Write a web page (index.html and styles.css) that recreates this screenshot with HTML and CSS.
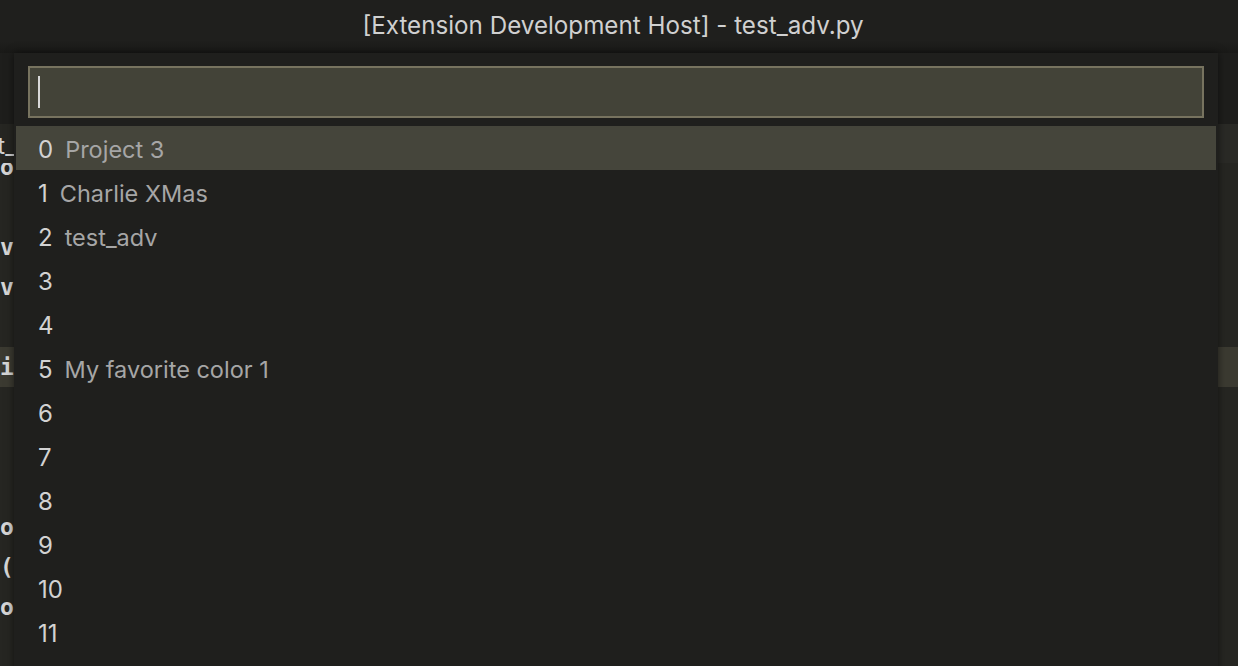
FILE: index.html
```html
<!DOCTYPE html>
<html>
<head>
<meta charset="utf-8">
<link rel="stylesheet" href="styles.css">
</head>
<body>
<div class="window">
  <div class="titlebar"><span class="title">[Extension Development Host] - test_adv.py</span></div>
  <div class="workbench">
    <div class="topband"></div>
    <div class="tabbar"><div class="tab">test_adv.py</div></div>
    <div class="editor">
      <div class="code">
        <div class="line">out = []</div>
        <div class="line"></div>
        <div class="line">var1 = 1</div>
        <div class="line">var2 = 2</div>
        <div class="line"></div>
        <div class="line current">if var1 == var2:</div>
        <div class="line">    pass</div>
        <div class="line"></div>
        <div class="line"></div>
        <div class="line">out.append(var1)</div>
        <div class="line">(var1, var2)</div>
        <div class="line">out.sort()</div>
        <div class="line"></div>
      </div>
    </div>
  </div>

  <div class="quickpick">
    <div class="inputbox"><span class="caret"></span></div>
    <div class="list">
      <div class="item selected"><span class="num">0</span><span class="label">Project 3</span></div>
      <div class="item"><span class="num">1</span><span class="label">Charlie XMas</span></div>
      <div class="item"><span class="num">2</span><span class="label">test_adv</span></div>
      <div class="item"><span class="num">3</span></div>
      <div class="item"><span class="num">4</span></div>
      <div class="item"><span class="num">5</span><span class="label">My favorite color 1</span></div>
      <div class="item"><span class="num">6</span></div>
      <div class="item"><span class="num">7</span></div>
      <div class="item"><span class="num">8</span></div>
      <div class="item"><span class="num">9</span></div>
      <div class="item"><span class="num">10</span></div>
      <div class="item"><span class="num">11</span></div>
    </div>
  </div>
</div>
</body>
</html>
```

FILE: styles.css
```css
* { box-sizing: border-box; }
html, body {
  margin: 0;
  padding: 0;
  width: 1238px;
  height: 666px;
  overflow: hidden;
  background: #262622;
}
.window {
  position: relative;
  width: 1238px;
  height: 666px;
  overflow: hidden;
  display: flex;
  flex-direction: column;
  font-family: "Inter", "Liberation Sans", sans-serif;
}
.titlebar {
  height: 53px;
  flex: none;
  background: linear-gradient(#1f1f1d 0, #1f1f1d 42px, #191917 53px);
  display: flex;
  justify-content: center;
  align-items: center;
  padding: 0 12px 2px 0;
}
.title {
  color: #d0d0d0;
  font-size: 24.2px;
}
.workbench {
  flex: 1;
  display: flex;
  flex-direction: column;
  min-height: 0;
}
.topband {
  height: 71px;
  flex: none;
  background: #1e1e1c;
}
.tabbar {
  height: 39px;
  flex: none;
  background: #2a2a26;
  overflow: hidden;
}
.tab {
  display: inline-block;
  height: 39px;
  line-height: 43px;
  margin-left: -37px;
  padding-right: 16px;
  color: #d0d0d0;
  font-size: 24px;
  background: #262622;
}
.editor {
  flex: 1;
  overflow: hidden;
  background: #262622;
  min-height: 0;
}
.code {
  margin-top: -16px;
  font-family: "DejaVu Sans Mono", "Liberation Mono", monospace;
  font-weight: bold;
  font-size: 23px;
  color: #d6d6d6;
}
.line {
  height: 40px;
  line-height: 40px;
  white-space: pre;
}
.line.current {
  background: #3b3a31;
}

.quickpick {
  position: absolute;
  left: 14px;
  top: 53px;
  width: 1204px;
  height: 640px;
  background: #1f1f1d;
  box-shadow: 0 0 8px rgba(0, 0, 0, 0.55);
  padding: 13px 14px 0 14px;
  display: flex;
  flex-direction: column;
}
.inputbox {
  height: 52px;
  flex: none;
  border: 2px solid #77735f;
  background: #434338;
  display: flex;
  align-items: center;
  padding-left: 8px;
}
.caret {
  width: 2px;
  height: 32px;
  background: #d8d8d8;
}
.list {
  margin: 8px -12px 0 -12px;
  display: flex;
  flex-direction: column;
}
.item {
  height: 44px;
  flex: none;
  display: flex;
  align-items: center;
  padding: 3px 0 0 22px;
  gap: 12px;
}
.item.selected {
  background: #45453b;
}
.num {
  color: #d2d2d2;
  font-size: 24px;
}
.label {
  color: #a6a6a6;
  font-size: 23.5px;
}
```
